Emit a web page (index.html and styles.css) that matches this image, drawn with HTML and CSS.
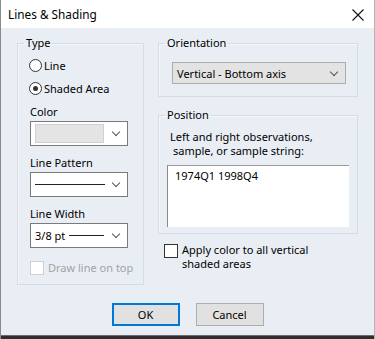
FILE: index.html
```html
<!DOCTYPE html>
<html lang="en">
<head>
    <meta charset="UTF-8">
    <title>Lines &amp; Shading</title>
    <link rel="stylesheet" href="styles.css">
</head>
<body>
    <div class="dialog">
        <!-- title bar -->
        <div class="titlebar">
            <span class="title">Lines &amp; Shading</span>
            <svg class="close" width="12" height="12" viewBox="0 0 12 12">
                <path d="M0.5 0.5 L11.5 11.5 M11.5 0.5 L0.5 11.5" stroke="#111" stroke-width="1.1" fill="none"/>
            </svg>
        </div>

        <div class="content">
            <div class="columns">
                <!-- left group -->
                <fieldset class="group type-group">
                    <legend>Type</legend>
                    <div class="group-body">
                        <label class="radio-row"><span class="radio"></span>Line</label>
                        <label class="radio-row second"><span class="radio checked"></span>Shaded Area</label>

                        <div class="field-label first">Color</div>
                        <div class="combo">
                            <span class="swatch"></span>
                            <span class="chevron"></span>
                        </div>

                        <div class="field-label">Line Pattern</div>
                        <div class="combo">
                            <span class="pattern"></span>
                            <span class="chevron"></span>
                        </div>

                        <div class="field-label">Line Width</div>
                        <div class="combo">
                            <span class="width-text">3/8 pt</span>
                            <span class="width-line"></span>
                            <span class="chevron"></span>
                        </div>

                        <label class="check-row disabled"><span class="checkbox"></span>Draw line on top</label>
                    </div>
                </fieldset>

                <!-- right column -->
                <div class="right-col">
                    <fieldset class="group orient-group">
                        <legend>Orientation</legend>
                        <div class="group-body">
                            <div class="dropdown">
                                <span>Vertical - Bottom axis</span>
                                <span class="chevron"></span>
                            </div>
                        </div>
                    </fieldset>

                    <fieldset class="group pos-group">
                        <legend>Position</legend>
                        <div class="group-body">
                            <div class="hint">Left and right observations,</div>
                            <div class="hint indent">sample, or sample string:</div>
                            <div class="textbox">1974Q1 1998Q4</div>
                        </div>
                    </fieldset>

                    <label class="check-row apply"><span class="checkbox"></span>Apply color to all vertical<br>shaded areas</label>
                </div>
            </div>

            <div class="buttons">
                <button class="btn default">OK</button>
                <button class="btn">Cancel</button>
            </div>
        </div>
        <div class="bottom-edge"></div>
    </div>
</body>
</html>
```

FILE: styles.css
```css
body {
    margin: 0;
    font-family: "Noto Sans", sans-serif;
    font-size: 11px;
    color: #000;
    background-color: #e9eef5;
}

.dialog {
    width: 373px;
    height: 339px;
    border-left: 1px solid #8a8a8a;
    border-right: 1px solid #b0b4ba;
    display: flex;
    flex-direction: column;
}

.titlebar {
    height: 28px;
    flex-shrink: 0;
    background-color: #fff;
    display: flex;
    align-items: center;
    justify-content: space-between;
    padding: 0 10px 0 7px;
}

.title {
    font-size: 11.8px;
    margin-top: -1px;
}

.close {
    margin-top: 1px;
}

.content {
    flex: 1;
    background-color: #e9eef5;
    padding: 7px 0 0 16px;
}

.columns {
    display: flex;
    align-items: flex-start;
}

.group {
    margin: 0;
    padding: 0;
    border: 1px solid #d6dce5;
    box-shadow: inset 1px 1px 0 #f4f7fa;
}

.group legend {
    padding: 0 2px;
    margin-left: 6px;
    line-height: 16px;
}

/* left group */
.type-group {
    width: 127px;
    box-sizing: border-box;
}

.type-group .group-body {
    padding: 4px 0 9px 12px;
}

.radio-row {
    display: flex;
    align-items: center;
    height: 20px;
    margin-left: -1px;
}

.radio-row.second {
    margin-top: 3px;
}

.radio {
    width: 11px;
    height: 11px;
    border: 1px solid #333;
    border-radius: 50%;
    background: #fff;
    margin-right: 2px;
    position: relative;
}

.radio.checked::after {
    content: "";
    position: absolute;
    left: 3px;
    top: 3px;
    width: 5px;
    height: 5px;
    border-radius: 50%;
    background: #333;
}

.field-label {
    height: 16px;
    line-height: 16px;
    margin-top: 9px;
}

.field-label.first {
    margin-top: 6px;
}

.combo {
    width: 98px;
    height: 25px;
    box-sizing: border-box;
    margin-top: 1px;
    border: 1px solid #7a7a7a;
    background: #fff;
    display: flex;
    align-items: center;
    padding: 0 8px 0 4px;
}

.swatch {
    width: 69px;
    height: 19px;
    background: #e4e4e4;
    border: 1px solid #d0d0d0;
    box-sizing: border-box;
}

.pattern {
    width: 70px;
    height: 1px;
    background: #222;
}

.width-text {
    margin-right: 4px;
}

.width-line {
    width: 35px;
    height: 1px;
    background: #222;
}

.chevron {
    width: 5px;
    height: 5px;
    border-right: 1px solid #555;
    border-bottom: 1px solid #555;
    transform: rotate(45deg);
    margin-left: auto;
    margin-top: -3px;
}

.check-row {
    display: flex;
    align-items: flex-start;
    line-height: 14px;
    white-space: nowrap;
}

.checkbox {
    width: 12px;
    height: 12px;
    border: 1px solid #333;
    background: #fff;
    margin-right: 4px;
    flex-shrink: 0;
}

.check-row.disabled {
    color: #a3a3a3;
    margin-top: 13px;
    align-items: center;
}

.check-row.disabled .checkbox {
    border-color: #cfcfcf;
}

/* right column */
.right-col {
    margin-left: 14px;
    width: 200px;
}

.orient-group .group-body {
    padding: 11px 11px 12px 13px;
}

.dropdown {
    height: 22px;
    box-sizing: border-box;
    background: #e3e3e3;
    border: 1px solid #adadad;
    display: flex;
    align-items: center;
    padding: 0 8px 0 4px;
}

.pos-group {
    margin-top: 10px;
}

.pos-group .group-body {
    padding: 7px 8px 6px 8px;
}

.hint {
    line-height: 14px;
    padding-left: 3px;
}

.hint.indent {
    padding-left: 6px;
}

.textbox {
    margin-top: 7px;
    height: 62px;
    box-sizing: border-box;
    background: #fff;
    border-top: 1px solid #9a9a9a;
    border-left: 1px solid #8a8a8a;
    padding: 2px 7px;
    line-height: 15px;
}

.apply {
    margin-top: 9px;
    margin-left: 6px;
}

.apply .checkbox {
    margin-top: 1px;
}

/* dialog buttons */
.buttons {
    display: flex;
    justify-content: center;
    gap: 16px;
    margin-top: 18px;
    padding-right: 16px;
}

.btn {
    width: 68px;
    height: 23px;
    font-family: inherit;
    font-size: 11px;
    background: #e1e1e1;
    border: 1px solid #adadad;
    padding: 0;
}

.btn.default {
    border: 2px solid #0078d7;
}

.bottom-edge {
    height: 3px;
    flex-shrink: 0;
    border-top: 1px solid #6a6a6a;
    background: #2e2e2e;
}
```
